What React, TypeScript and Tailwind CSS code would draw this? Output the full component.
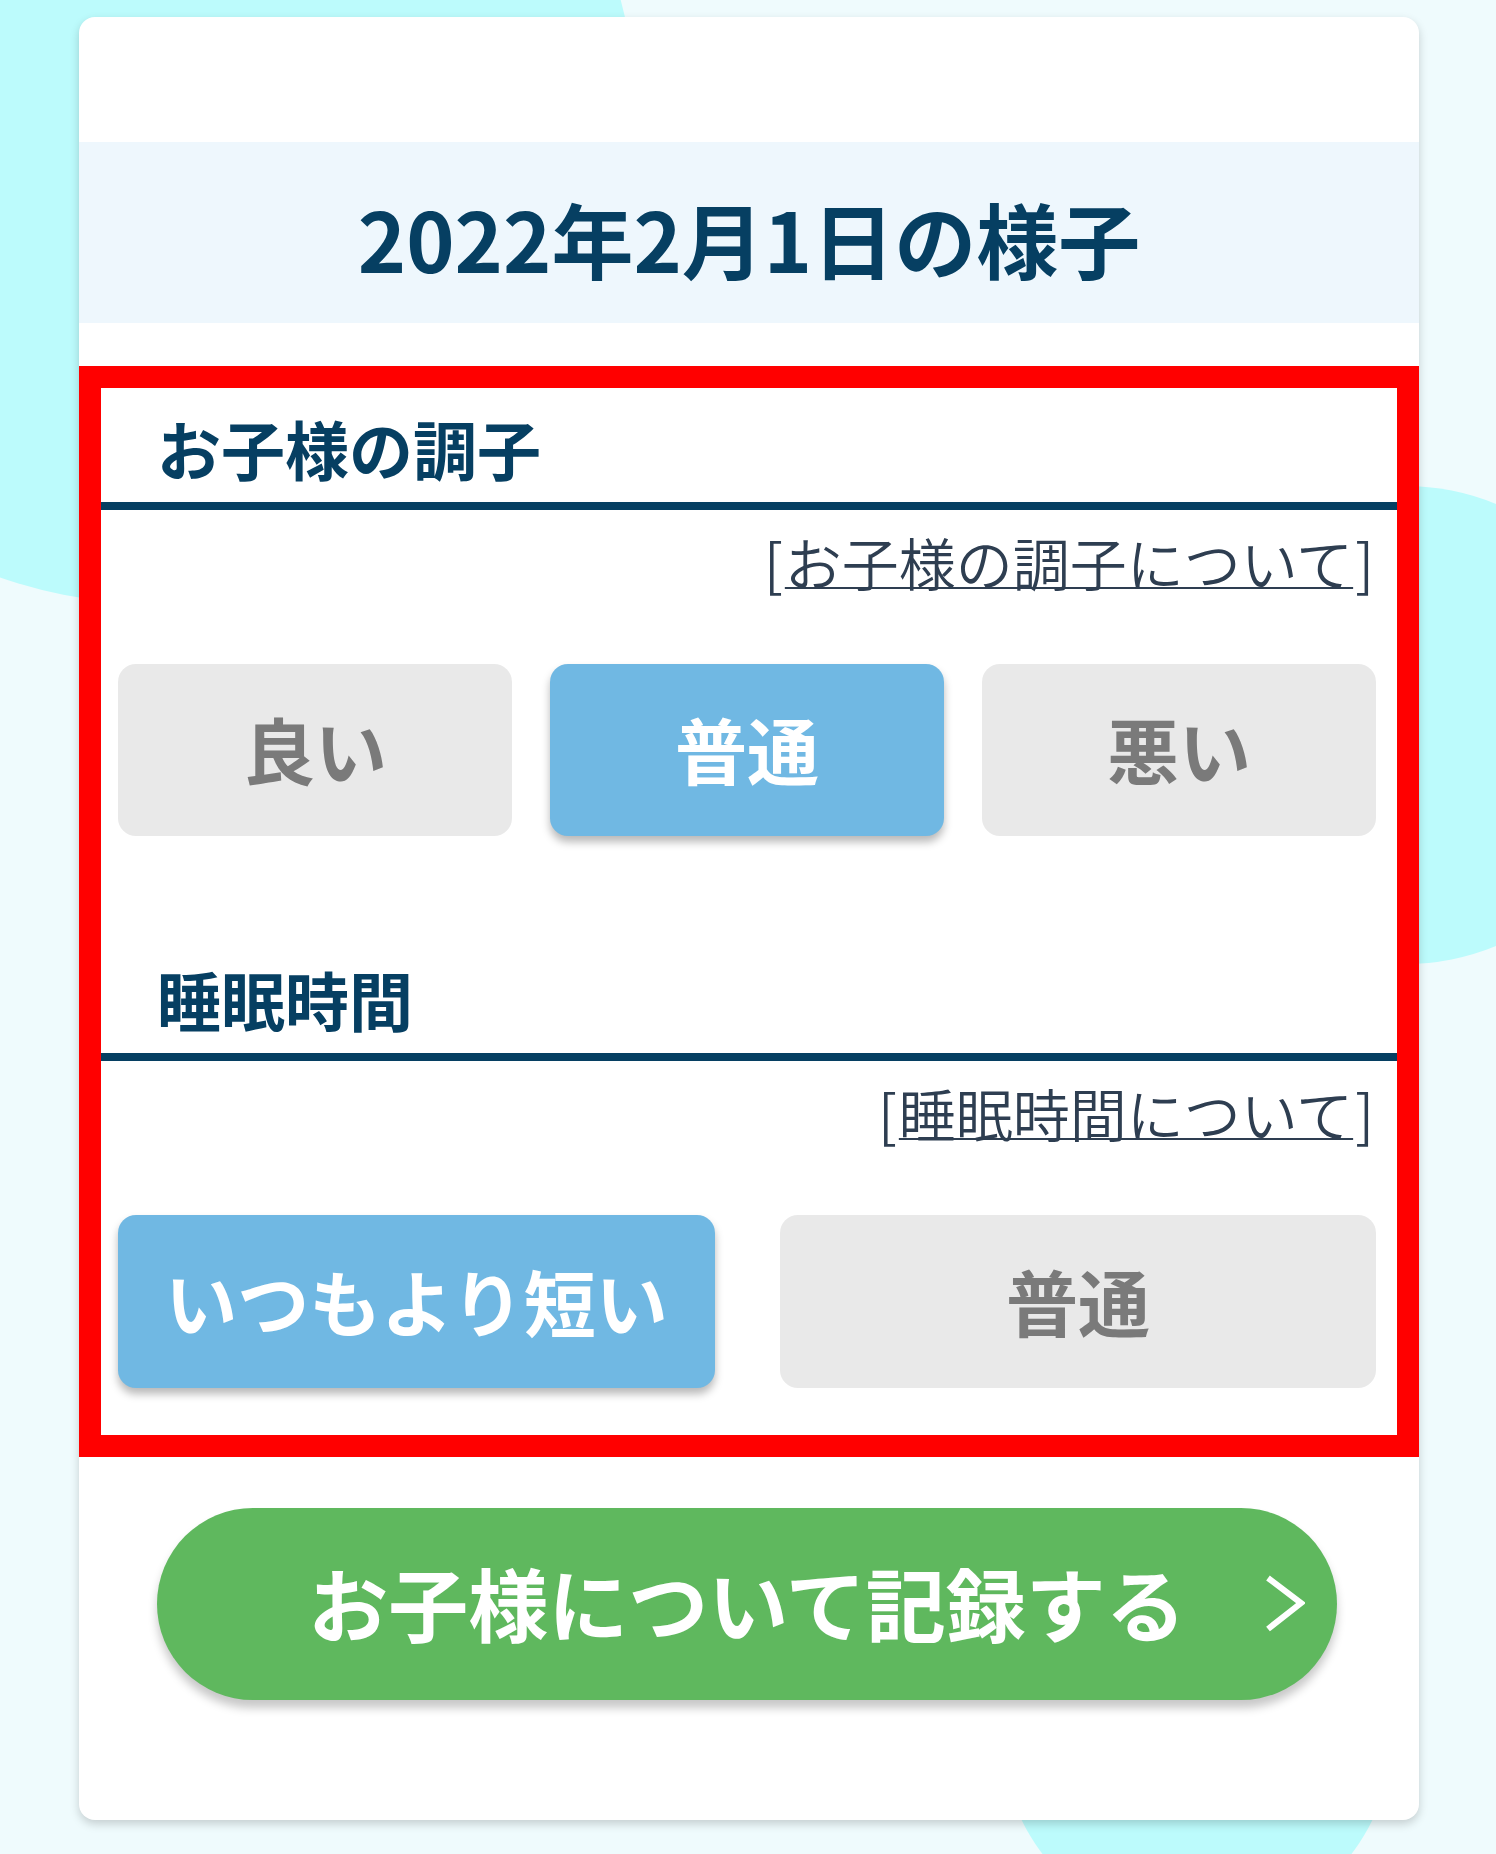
import React from "react";

const FONT = { fontFamily: '"Noto Sans CJK JP", "Noto Sans", sans-serif' };

function Choice({ label, active, w }: { label: string; active?: boolean; w: string }) {
  return (
    <div
      className={
        "flex items-center justify-center rounded-[18px] font-bold text-[72px] leading-[72px] pb-[4px] " +
        w +
        (active
          ? " h-full bg-[#70b8e3] text-white shadow-[0_6px_8px_rgba(0,0,0,0.28)]"
          : " h-full bg-[#e9e9e9] text-[#7a7a7a]")
      }
    >
      {label}
    </div>
  );
}

function SectionHead({ title }: { title: string }) {
  return (
    <div className="pl-[56px] pt-[27px] pb-[23px] border-b-[8px] border-[#063f62]">
      <h2 className="text-[64px] leading-[64px] font-bold text-[#063f62]">{title}</h2>
    </div>
  );
}

function InfoLink({ text }: { text: string }) {
  return (
    <div className="mt-[22px] pr-[23px] flex justify-end text-[57px] leading-[58px] font-[350] text-[#2e3e51]">
      <span className="mr-[2px]">[</span>
      <span className="underline decoration-2">{text}</span>
      <span className="ml-[2px]">]</span>
    </div>
  );
}

export default function App() {
  return (
    <div className="relative w-[1496px] h-[1854px] overflow-hidden bg-[#effbfd]" style={FONT}>
      {/* decorative background blobs */}
      <div className="absolute left-[-323px] top-[-356px] w-[960px] h-[960px] rounded-full bg-[#bcfbfc]" />
      <div className="absolute left-[1166px] top-[486px] w-[478px] h-[478px] rounded-full bg-[#bcfbfc]" />
      <div className="absolute left-[1002px] top-[1540px] w-[390px] h-[390px] rounded-full bg-[#bcfbfc]" />

      <div className="relative ml-[79px] mt-[17px] w-[1340px] rounded-[16px] bg-white shadow-[0_4px_10px_rgba(0,0,0,0.18)] pt-[125px] pb-[120px]">
        <div className="h-[181px] bg-[#eef7fd] pt-[55px] text-center">
          <h1 className="text-[82px] leading-[82px] font-bold text-[#063f62]">2022年2月1日の様子</h1>
        </div>

        <div className="mt-[43px] border-[22px] border-[#ff0000] pb-[47px]">
          <SectionHead title="お子様の調子" />
          <InfoLink text="お子様の調子について" />
          <div className="mt-[74px] h-[172px] pl-[17px] pr-[21px] flex justify-between">
            <Choice label="良い" w="w-[394px]" />
            <Choice label="普通" w="w-[394px]" active />
            <Choice label="悪い" w="w-[394px]" />
          </div>

          <div className="mt-[103px]">
            <SectionHead title="睡眠時間" />
          </div>
          <InfoLink text="睡眠時間について" />
          <div className="mt-[74px] h-[173px] pl-[17px] pr-[21px] flex justify-between">
            <Choice label="いつもより短い" w="w-[597px]" active />
            <Choice label="普通" w="w-[596px]" />
          </div>
        </div>

        <div className="mt-[51px] px-[78px]">
          <button className="relative w-[1180px] h-[192px] rounded-full bg-[#5fb85e] text-white font-bold text-[80px] leading-[80px] flex items-center justify-center pb-[6px] shadow-[0_8px_10px_rgba(0,0,0,0.22)]">
            <span>お子様について記録する</span>
            <svg
              className="absolute right-[32px] top-1/2 -translate-y-1/2"
              width="40"
              height="58"
              viewBox="0 0 40 58"
              fill="none"
            >
              <polyline points="3,3 36,28 3,54" stroke="white" strokeWidth="6" strokeLinejoin="miter" />
            </svg>
          </button>
        </div>
      </div>
    </div>
  );
}
